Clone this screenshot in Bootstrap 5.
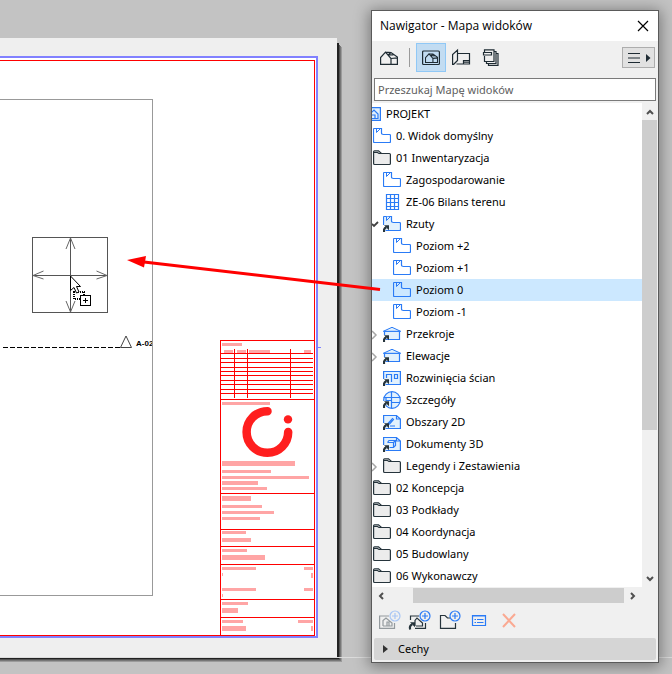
<!DOCTYPE html>
<html lang="pl">
<head>
<meta charset="utf-8">
<meta name="viewport" content="width=device-width, initial-scale=1">
<title>Nawigator - Mapa widoków</title>
<link href="https://cdn.jsdelivr.net/npm/bootstrap@5.3.0/dist/css/bootstrap.min.css" rel="stylesheet">
<style>
  body { background: #c3c3c3; color: #000; font-family: "Noto Sans", sans-serif; font-size: 11px; line-height: 16px; }
  .workspace { padding: 10px 13px 11px; }
  .sheet-canvas, .drag-arrow { position: absolute; left: 0; top: 0; pointer-events: none; }
  .drag-arrow { z-index: 3; }
  .palette { width: 288px; background: #f0f0f0; border: 1px solid #5a5a5a; box-shadow: 0 2px 14px 2px rgba(0,0,0,.38); z-index: 2; }
  .palette-title { height: 30px; background: #fff; padding: 0 8px; }
  .palette-title h1 { font-family: "Open Sans", sans-serif; font-size: 12px; line-height: 16px; }
  .bare { background: none; border: 0; padding: 0; display: flex; color: inherit; }
  .ic { fill: none; stroke: currentColor; stroke-width: 1.2; display: block; overflow: visible; }
  .tools { height: 37px; padding: 2px 3px 6px 8px; gap: 6px; color: #1e2b33; }
  .tools .chosen { background: #c2dcf2; border: 1px solid #90c8f6; width: 30px; height: 29px; align-items: center; justify-content: center; }
  .tools .divide { width: 1px; height: 19px; background: #9a9a9a; margin-left: 5px; }
  .tools .publish { margin-left: 6px; }
  .tools .options { background: #e1e1e1; border: 1px solid #adadad; width: 33px; height: 21px; align-items: center; justify-content: center; }
  .search-wrap { margin: 0 2px; }
  .search-box { height: 23px; border: 1px solid #7a7a7a; border-radius: 0; font-size: 11px; line-height: 16px; padding: 0 3px; color: #333; }
  .search-box::placeholder { color: #5e5e5e; opacity: 1; }
  .tree-pane { margin-top: 2px; }
  .tree-area { background: #fff; }
  .tree-row { height: 22px; gap: 5px; color: #000; white-space: nowrap; }
  .tree-row .ic { color: #2a7bf6; flex: none; }
  .tree-row .ic.dark { color: #26343c; }
  .lv0 { padding-left: 1px; }
  .lv1 { padding-left: 11px; }
  .lv2 { padding-left: 21px; }
  .root-row { overflow: hidden; }
  .root-row .ic { margin-left: -9px; }
  .picked { background: #cce8ff; }
  .twist { position: absolute; left: 0; top: 7px; }
  .vbar { width: 16px; background: #f0f0f0; color: #505050; }
  .vbar .thumb { height: 310px; background: #cdcdcd; margin-right: 1px; }
  .vbar .bare { height: 17px; align-items: center; justify-content: center; }
  .hbar { height: 16px; padding-right: 17px; color: #505050; }
  .hbar .bare { width: 17px; height: 15px; align-items: center; justify-content: center; }
  .hbar .thumb { height: 15px; background: #cdcdcd; margin-left: 24px; }
  .actions { height: 35px; padding: 7px 7px 0; gap: 8px; color: #26343c; }
  .props { height: 22px; background: #d5d5d5; border-radius: 2px; margin: 0 2px 2px; gap: 10px; padding-left: 9px; }
</style>
<script src="https://cdn.jsdelivr.net/npm/bootstrap@5.3.0/dist/js/bootstrap.bundle.min.js"></script>
</head>
<body>
<svg width="0" height="0" class="position-absolute" aria-hidden="true">
  <defs>
    <symbol id="view" viewBox="0 0 18 16"><path d="M.5 .5V13.500q0 1 1 1H16.500q1 0 1-1V7.500q0-1-1-1H10.500Q8.500 6.500 8.500 5V.5H.5"/><path stroke-width="1" d="M3.500.5V4.500L7 1"/></symbol>
    <symbol id="folder" viewBox="0 0 18 16"><path d="M.6 1.500V13.500q0 1 1 1H16.400q1 0 1-1V4.500q0-1-1-1H8.500L5.500.8H1.500q-.9 0-.9 1z" fill="#ececec"/><path d="M.8 2.500H4.500L6 3.500H9"/></symbol>
    <symbol id="link" viewBox="0 0 18 16"><path d="M-.5 9H2.500V15.500H-.5z" fill="#fff" stroke="none"/><path d="M1.200 16.500Q0 13 3.200 11.300" stroke="#26343c" stroke-width="2.200"/><path d="M1 9.200H6V14.200z" fill="#26343c" stroke="none"/></symbol>
    <symbol id="house" viewBox="0 0 18 16"><path d="M1.500 5.500H16.500V13.500H1.500z" fill="#e2f1fd"/><path d="M.3 5.300L9 1.300L17.700 5.300z" fill="#e2f1fd" stroke-width="1"/></symbol>
    <symbol id="home" viewBox="0 0 18 14"><path d="M.6 13V6.500L5.500 1.200L11 7.500V13.400H.6V12M5.500 1.200L11 1.500L17.400 6V13.400H11M11 7.500L17.400 6.800M7.500 3.600L13.500 4M11 1.500L8 4"/></symbol>
    <symbol id="plus" viewBox="0 0 12 12"><circle cx="6" cy="6" r="5" fill="#f0f0f0"/><path d="M6 3V9M3 6H9"/></symbol>
  </defs>
</svg>

<svg class="sheet-canvas" width="672" height="674" role="img" aria-label="Arkusz z rysunkiem" shape-rendering="crispEdges">
  <path fill="#9b9b9b" d="M341 47h1v615h-1zM0 661h341v1H0z"/>
  <path fill="#777" d="M340 46h1v615h-1zM0 660h341v1H0z"/>
  <path fill="#555" d="M339 45h1v615h-1zM0 659h340v1H0z"/>
  <path fill="#222" d="M337 43h2v615h-2zM0 658h339v1H0z"/>
  <path fill="#efefef" d="M0 38H337V657H0z"/>
  <path fill="#dcdcdc" d="M0 657H672v1H0z"/>
  <path fill="#fff" d="M0 57H317V637H0z"/>
  <path fill="none" stroke="#8080ff" stroke-width="2" d="M0 57H317V637H0"/>
  <path fill="none" stroke="#8080ff" d="M318 347.500H321"/>
  <path fill="none" stroke="#f00" d="M0 60.500H314.500V635.500H0"/>
  <path fill="none" stroke="#999" d="M0 99.500H152.500V595.500H0"/>
  <path fill="none" stroke="#f00" d="M220.500 635V340.500H314M221 399.500H314M221 493.500H314M221 529.500H314M221 546.500H314M221 564.500H314M221 599.500H314M221 617.500H314"/>
  <g fill="#ffa5a5">
    <path d="M222 343h20v3h-20zM224 350h9v3h-9zM237 350h9v3h-9zM249 350h21v3h-21zM304 350h7v3h-7zM222 402h48v3h-48z"/>
    <path d="M222 461h73v5h-73zM222 470h49v3h-49zM222 476h87v3h-87zM222 481h36v4h-36zM222 487h45v3h-45z"/>
    <path d="M222 496h29v5h-29zM222 505h40v3h-40zM222 511h52v3h-52zM222 517h38v3h-38zM222 531h24v3h-24zM222 538h29v4h-29z"/>
    <path d="M222 549h25v3h-25zM222 555h43v5h-43zM222 567h34v3h-34zM304 567h9v3h-9zM222 573h1v3h-1zM311 573h2v5h-2zM222 588h34v3h-34zM304 588h9v3h-9zM222 594h1v3h-1z"/>
    <path d="M222 602h26v3h-26zM222 608h16v5h-16zM222 620h21v3h-21zM298 620h15v3h-15zM222 626h24v5h-24zM311 626h2v5h-2z"/>
  </g>
  <path fill="none" stroke="#f00" d="M221 353.500H313M221 358.500H313M221 362.500H313M221 367.500H313M221 371.500H313M221 375.500H313M221 380.500H313M221 384.500H313M221 389.500H313M221 393.500H313M234.500 349V398M247.500 349V398M290.500 349V398"/>
  <g shape-rendering="geometricPrecision">
    <path fill="none" stroke="#ff1e1e" stroke-width="8.500" stroke-linecap="round" d="M267.500 411.200A20.800 20.800 0 1 0 288.200 432"/>
    <circle cx="288" cy="419.400" r="4.200" fill="#ff1e1e"/>
  </g>
  <path fill="none" stroke="#555" d="M32.500 237.500H107.500V312.500H32.500zM70.500 237V312M32 275.500H107"/>
  <g shape-rendering="geometricPrecision">
    <path fill="none" stroke="#666" d="M66 249L70.500 238L75 249M66 301L70.500 312L75 301M43.500 271L33 275.500L43.500 279M96.500 271L107 275.500L96.500 279"/>
    <path fill="none" stroke="#444" d="M126 336L120.500 347.500H131.500z"/>
  </g>
  <path stroke="#000" stroke-dasharray="5 2" d="M3 347.500H120"/>
  <svg x="134" y="336" width="18" height="16"><text x="2" y="10" font-family="Liberation Sans, sans-serif" font-weight="700" font-size="8">A-02</text></svg>
  <path fill="none" stroke="#000" stroke-dasharray="1 1" stroke-width="2" d="M73.500 292H84V299H73.500z"/>
  <path fill="#fff" stroke="#000" shape-rendering="geometricPrecision" d="M70.500 276V290.500L74 287.500L76.500 293L79 292L76.500 286.500H80.500z"/>
  <path fill="#fff" stroke="#000" d="M80.500 295.500H90.500V305.500H80.500zM85.500 298V303M83 300.500H88"/>
</svg>

<main class="workspace d-flex justify-content-end min-vh-100">
  <section class="palette position-relative d-flex flex-column align-self-start">
    <header class="palette-title d-flex align-items-center justify-content-between">
      <h1 class="m-0 fw-normal">Nawigator - Mapa widoków</h1>
      <button class="bare" type="button" aria-label="Zamknij"><svg class="ic" width="14" height="14"><path d="M2 2L12 12M12 2L2 12"/></svg></button>
    </header>
    <div class="tools d-flex align-items-center">
      <button class="bare" type="button" aria-label="Mapa projektu"><svg class="ic" width="18" height="14"><use href="#home"/></svg></button>
      <span class="divide"></span>
      <button class="bare chosen" type="button" aria-label="Mapa widoków"><svg class="ic" width="18" height="16"><rect x=".6" y="1" width="16.800" height="13.500" rx="1"/><svg x="3" y="3" width="13" height="10" viewBox="0 0 18 14"><g stroke-width="1.500"><use href="#home"/></g></svg></svg></button>
      <button class="bare" type="button" aria-label="Teczka arkuszy"><svg class="ic" width="19" height="17"><path d="M1.500 15.500H.6V5.500L5.500 1V11.500L1.500 15.500M5.500 4.500H17.500V15H4.500M11.500 15V11.500H17.500M11.500 13.200H17.500"/></svg></button>
      <button class="bare publish" type="button" aria-label="Zestawy publikacji"><svg class="ic" width="16" height="17"><path d="M1.500 3V.8H11V12.500H1.500V7M.5 3.500H8.500V6H.5zM11 2.500H13V14.500H3.500V12.500M13 4.500H15V16.400H5.500V14.500"/></svg></button>
      <button class="bare options ms-auto" type="button" aria-label="Opcje"><svg class="ic" width="24" height="12"><path d="M1 1.500H13M1 6H13M1 10.500H13"/><path d="M19 2V10L23.500 6z" fill="currentColor" stroke="none"/></svg></button>
    </div>
    <div class="search-wrap"><input class="search-box form-control" type="text" aria-label="Przeszukaj Mapę widoków" placeholder="Przeszukaj Mapę widoków"></div>
    <div class="tree-pane d-flex">
      <div class="tree-area flex-grow-1" role="tree">
        <div class="tree-row root-row d-flex align-items-center" role="treeitem"><svg class="ic" width="18" height="14"><path d="M2 .6H17.400V13.400H2z" fill="#e2f1fd"/><path d="M8 11V6L11 3L15 7V11.500H8M12 11V8H9"/></svg><span>PROJEKT</span></div>
        <div class="tree-row lv0 d-flex align-items-center" role="treeitem"><svg class="ic" width="18" height="16"><use href="#view"/></svg><span>0. Widok domyślny</span></div>
        <div class="tree-row lv0 d-flex align-items-center" role="treeitem"><svg class="ic dark" width="18" height="16"><use href="#folder"/></svg><span>01 Inwentaryzacja</span></div>
        <div class="tree-row lv1 d-flex align-items-center" role="treeitem"><svg class="ic" width="18" height="16"><use href="#view"/></svg><span>Zagospodarowanie</span></div>
        <div class="tree-row lv1 d-flex align-items-center" role="treeitem"><svg class="ic" width="18" height="16"><path d="M3.500.5H15.500V15.500H3.500zM7.500.5V15.500M11.500.5V15.500M3.500 4.500H15.500M3.500 8.500H15.500M3.500 12.500H15.500"/></svg><span>ZE-06 Bilans terenu</span></div>
        <div class="tree-row lv1 d-flex align-items-center position-relative" role="treeitem" aria-expanded="true"><svg class="twist" width="8" height="8" fill="none" stroke="#404040" stroke-width="1.800"><path d="M0 4L2 6L6 2"/></svg><svg class="ic" width="18" height="16"><g fill="#e2f1fd"><use href="#view"/></g><use href="#link"/></svg><span>Rzuty</span></div>
        <div class="tree-row lv2 d-flex align-items-center" role="treeitem"><svg class="ic" width="18" height="16"><use href="#view"/></svg><span>Poziom +2</span></div>
        <div class="tree-row lv2 d-flex align-items-center" role="treeitem"><svg class="ic" width="18" height="16"><use href="#view"/></svg><span>Poziom +1</span></div>
        <div class="tree-row lv2 picked d-flex align-items-center" role="treeitem" aria-selected="true"><svg class="ic" width="18" height="16"><use href="#view"/></svg><span>Poziom 0</span></div>
        <div class="tree-row lv2 d-flex align-items-center" role="treeitem"><svg class="ic" width="18" height="16"><use href="#view"/></svg><span>Poziom -1</span></div>
        <div class="tree-row lv1 d-flex align-items-center position-relative" role="treeitem"><svg class="twist" width="8" height="10" fill="none" stroke="#a6a6a6" stroke-width="1.500"><path d="M0 1L4 5L0 9"/></svg><svg class="ic" width="18" height="16"><use href="#house"/><use href="#link"/></svg><span>Przekroje</span></div>
        <div class="tree-row lv1 d-flex align-items-center position-relative" role="treeitem"><svg class="twist" width="8" height="10" fill="none" stroke="#a6a6a6" stroke-width="1.500"><path d="M0 1L4 5L0 9"/></svg><svg class="ic" width="18" height="16"><use href="#house"/><use href="#link"/></svg><span>Elewacje</span></div>
        <div class="tree-row lv1 d-flex align-items-center" role="treeitem"><svg class="ic" width="18" height="16"><path d="M.6 1.500H17.400V14.500H.6z" fill="#e2f1fd"/><path d="M3.500 8V4.500H8.500V12M11.500 4.500H14.500V8.500H11.500z"/><use href="#link"/></svg><span>Rozwinięcia ścian</span></div>
        <div class="tree-row lv1 d-flex align-items-center" role="treeitem"><svg class="ic" width="18" height="16"><circle cx="9" cy="8" r="8.300" fill="#e2f1fd"/><path d="M8.500 0V16M.6 5.500H17.400M8.500 10.500H17M3 5.500V8.500H8.500"/><use href="#link"/></svg><span>Szczegóły</span></div>
        <div class="tree-row lv1 d-flex align-items-center" role="treeitem"><svg class="ic" width="18" height="16"><path d="M.6 1.500H13.500L17.400 5V14.500H.6zM13.500 1.500V5H17.400" fill="#e2f1fd"/><path d="M5 9.500L9.500 4.500L10.500 5.500L6.500 10zM7 12H12"/><use href="#link"/></svg><span>Obszary 2D</span></div>
        <div class="tree-row lv1 d-flex align-items-center" role="treeitem"><svg class="ic" width="18" height="16"><path d="M.6 1.500H13.500L17.400 5V14.500H.6zM13.500 1.500V5H17.400" fill="#e2f1fd"/><path d="M4.500 6.500L6 4.500H12.500V9.500L10.500 11.500H6.500M4.500 6.500H10.500V11.500M10.500 6.500L12.500 4.500"/><use href="#link"/></svg><span>Dokumenty 3D</span></div>
        <div class="tree-row lv1 d-flex align-items-center position-relative" role="treeitem"><svg class="twist" width="8" height="10" fill="none" stroke="#a6a6a6" stroke-width="1.500"><path d="M0 1L4 5L0 9"/></svg><svg class="ic dark" width="18" height="16"><use href="#folder"/></svg><span>Legendy i Zestawienia</span></div>
        <div class="tree-row lv0 d-flex align-items-center" role="treeitem"><svg class="ic dark" width="18" height="16"><use href="#folder"/></svg><span>02 Koncepcja</span></div>
        <div class="tree-row lv0 d-flex align-items-center" role="treeitem"><svg class="ic dark" width="18" height="16"><use href="#folder"/></svg><span>03 Podkłady</span></div>
        <div class="tree-row lv0 d-flex align-items-center" role="treeitem"><svg class="ic dark" width="18" height="16"><use href="#folder"/></svg><span>04 Koordynacja</span></div>
        <div class="tree-row lv0 d-flex align-items-center" role="treeitem"><svg class="ic dark" width="18" height="16"><use href="#folder"/></svg><span>05 Budowlany</span></div>
        <div class="tree-row lv0 d-flex align-items-center" role="treeitem"><svg class="ic dark" width="18" height="16"><use href="#folder"/></svg><span>06 Wykonawczy</span></div>
      </div>
      <div class="vbar d-flex flex-column">
        <button class="bare" type="button" aria-label="W górę"><svg class="ic" width="8" height="6"><path d="M1 5L4 2L7 5" stroke-width="2"/></svg></button>
        <div class="thumb"></div>
        <button class="bare mt-auto" type="button" aria-label="W dół"><svg class="ic" width="8" height="6"><path d="M1 1L4 4L7 1" stroke-width="2"/></svg></button>
      </div>
    </div>
    <div class="hbar d-flex align-items-end">
      <button class="bare" type="button" aria-label="W lewo"><svg class="ic" width="6" height="8"><path d="M5 1L2 4L5 7" stroke-width="2"/></svg></button>
      <div class="thumb flex-grow-1"></div>
      <button class="bare" type="button" aria-label="W prawo"><svg class="ic" width="6" height="8"><path d="M1 1L4 4L1 7" stroke-width="2"/></svg></button>
    </div>
    <div class="actions d-flex">
      <button class="bare" type="button" disabled aria-label="Zapisz widok"><svg class="ic" width="22" height="20"><g opacity=".45"><path d="M10 6H.6V18.400H15.500V13"/><path d="M4 16V10.500L7 8L13 13V16H4M8 16V12H10V16"/></g><svg x="10" y="0" width="12" height="12" color="#a8c6f5"><use href="#plus"/></svg></svg></button>
      <button class="bare" type="button" aria-label="Klonuj folder"><svg class="ic" width="22" height="20"><path d="M10 6H1.500V10M6 18.400H16.500V13M6 16V10.500L8 8L13.500 13V16H7"/><path d="M1.200 19.500Q0 16 3.200 14.300" stroke-width="2.200"/><path d="M1 12.200H6V17.200z" fill="currentColor" stroke="none"/><svg x="10" y="0" width="12" height="12" color="#2a7bf6"><use href="#plus"/></svg></svg></button>
      <button class="bare" type="button" aria-label="Nowy folder"><svg class="ic" width="22" height="20"><path d="M16.500 13V18.400H1.500V5.500H6L8.500 8H12"/><svg x="10" y="0" width="12" height="12" color="#2a7bf6"><use href="#plus"/></svg></svg></button>
      <button class="bare" type="button" aria-label="Ustawienia"><svg class="ic" width="22" height="20" color="#2a7bf6"><path d="M3.500 5.500H16.500V15.500H3.500zM3.500 6H16.500M8 9.500H14.500M8 12.500H14.500M5.500 9.500H7M5.500 12.500H7"/></svg></button>
      <button class="bare" type="button" aria-label="Usuń"><svg class="ic" width="22" height="20" color="#faa992"><path d="M4 4L16 17M16 4L4 17" stroke-width="2"/></svg></button>
    </div>
    <button class="bare props align-items-center" type="button"><svg width="5" height="8" fill="#333"><path d="M0 0V8L5 4z"/></svg><span>Cechy</span></button>
  </section>
</main>

<svg class="drag-arrow" width="672" height="674" aria-hidden="true"><path d="M380 289.500L144 262" stroke="#f00" stroke-width="3"/><path d="M127 260L146 256L144 267.500z" fill="#f00"/></svg>
</body>
</html>
